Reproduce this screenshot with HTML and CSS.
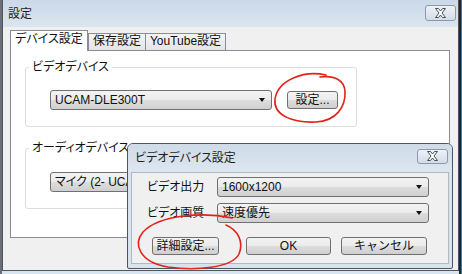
FILE: index.html
```html
<!DOCTYPE html>
<html lang="ja">
<head>
  <meta charset="UTF-8" />
  <title>設定</title>
  <link rel="stylesheet" href="styles.css">
</head>
<body>

  <div class="window main-window">
    <div class="titlebar">
      <span class="title">設定</span>
      <button class="close-btn" type="button">
        <svg width="13" height="10" viewBox="0 0 13 10"><path d="M1.5 0.5H4.5L6.5 3L8.5 0.5H11.5L8 5L11.5 9.5H8.5L6.5 7L4.5 9.5H1.5L5 5Z" fill="#fff" stroke="#46505c" stroke-width="1"/></svg>
      </button>
    </div>
    <div class="client">
      <div class="tabs">
        <div class="tab active">デバイス設定</div>
        <div class="tab tab-save">保存設定</div>
        <div class="tab tab-youtube">YouTube設定</div>
      </div>
      <div class="tab-panel">
        <fieldset class="group">
          <legend>ビデオデバイス</legend>
          <div class="group-row">
            <div class="combo combo-device"><span>UCAM-DLE300T</span><span class="arrow"></span></div>
            <button class="btn btn-setting" type="button">設定...</button>
          </div>
        </fieldset>
        <fieldset class="group group-audio">
          <legend>オーディオデバイス</legend>
          <div class="group-row">
            <div class="combo combo-device"><span>マイク (2- UCAM-DLE300T)</span><span class="arrow"></span></div>
            <button class="btn btn-setting" type="button">設定...</button>
          </div>
        </fieldset>
      </div>
    </div>
  </div>

  <div class="window dialog">
    <div class="titlebar dialog-titlebar">
      <span class="title">ビデオデバイス設定</span>
      <button class="close-btn" type="button">
        <svg width="13" height="10" viewBox="0 0 13 10"><path d="M1.5 0.5H4.5L6.5 3L8.5 0.5H11.5L8 5L11.5 9.5H8.5L6.5 7L4.5 9.5H1.5L5 5Z" fill="#fff" stroke="#46505c" stroke-width="1"/></svg>
      </button>
    </div>
    <div class="dialog-client">
      <div class="form-row">
        <label>ビデオ出力</label>
        <div class="combo combo-dialog"><span>1600x1200</span><span class="arrow"></span></div>
      </div>
      <div class="form-row">
        <label>ビデオ画質</label>
        <div class="combo combo-dialog"><span>速度優先</span><span class="arrow"></span></div>
      </div>
      <div class="button-row">
        <button class="btn btn-detail" type="button">詳細設定...</button>
        <button class="btn btn-ok" type="button">OK</button>
        <button class="btn btn-cancel" type="button">キャンセル</button>
      </div>
    </div>
  </div>

  <!-- hand drawn red marks -->
  <svg class="marks" width="462" height="274" viewBox="0 0 462 274">
    <path d="M326 75 C304 70 278 80 275 99 C273 115 292 123 316 122 C336 121 346 107 345 91 C344 81 336 75 320 77" />
    <path d="M232 218 C205 212 160 214 143 232 C133 244 139 262 168 267 C195 271 232 268 239 254 C244 242 238 230 226 225" />
  </svg>

</body>
</html>
```

FILE: styles.css
```css
* {
  box-sizing: border-box;
  margin: 0;
  padding: 0;
}

body {
  width: 462px;
  height: 274px;
  overflow: hidden;
  position: relative;
  font-family: "Liberation Sans", "Noto Sans CJK JP", sans-serif;
  font-size: 12px;
  font-feature-settings: "palt";
  color: #111;
  background: linear-gradient(to right, #6b7078 0, #6b7078 2px, #d7e5f3 2px, #d7e5f3 459px, #1d2530 459px, #1d2530 461px, #3d7ab8 461px);
}

button {
  font-family: inherit;
  font-size: 12px;
  color: #111;
}

.window {
  position: absolute;
  display: flex;
  flex-direction: column;
}

.main-window {
  left: 2px;
  top: 0;
  width: 457px;
  height: 271px;
  border: 1px solid #4f5660;
  border-top: none;
  background: #f0f0f0;
}

.titlebar {
  display: flex;
  align-items: center;
  height: 27px;
  padding-left: 5px;
  background: linear-gradient(#cbd9e8, #dbe5ef);
}

.title {
  line-height: 14px;
  color: #1e1e1e;
}

.close-btn {
  margin-left: auto;
  margin-right: 2px;
  margin-bottom: 2px;
  width: 31px;
  height: 16px;
  border: 1px solid #8c99aa;
  border-radius: 3px;
  background: linear-gradient(#eef2f7, #d3dce7);
  display: flex;
  align-items: center;
  justify-content: center;
}

.client {
  padding: 3px 0 0 7px;
}

.tabs {
  display: flex;
  align-items: flex-end;
  height: 21px;
}

.tab {
  height: 17px;
  margin-bottom: 1px;
  border: 1px solid #898c95;
  border-bottom: none;
  background: linear-gradient(#f4f4f4, #e4e4e4);
  line-height: 15px;
  text-align: center;
}

.tab.active {
  position: relative;
  z-index: 1;
  width: 78px;
  height: 21px;
  margin-bottom: 0;
  background: #fff;
  line-height: 17px;
}

.tab-save {
  width: 58px;
}

.tab-youtube {
  width: 81px;
  margin-left: -1px;
}

.tab-panel {
  width: 440px;
  height: 188px;
  margin-top: -1px;
  padding: 9px 0 0 14px;
  border: 1px solid #898c95;
  background: #fff;
}

.group {
  width: 332px;
  border: 1px solid #d9dee3;
  border-radius: 3px;
}

.group legend {
  margin-left: 3px;
  padding: 0 3px;
  line-height: 14px;
}

.group-audio {
  margin-top: 14px;
}

.group-row {
  display: flex;
  align-items: center;
  gap: 15px;
  padding: 16px 0 16px 24px;
}

.group-audio .group-row {
  padding-top: 17px;
}

.combo {
  display: flex;
  align-items: center;
  height: 20px;
  padding: 0 6px 0 4px;
  border: 1px solid #707070;
  border-radius: 3px;
  background: linear-gradient(#f3f3f3 0, #ebebeb 50%, #dddddd 50%, #d0d0d0 100%);
  line-height: 14px;
  white-space: nowrap;
  overflow: hidden;
}

.combo .arrow {
  margin-left: auto;
  width: 0;
  height: 0;
  border-left: 3.5px solid transparent;
  border-right: 3.5px solid transparent;
  border-top: 4px solid #111;
}

.combo-device {
  width: 222px;
}

.btn {
  height: 18px;
  border: 1px solid #707070;
  border-radius: 3px;
  background: linear-gradient(#f3f3f3 0, #ebebeb 50%, #dddddd 50%, #cfcfcf 100%);
  line-height: 14px;
}

.btn-setting {
  width: 51px;
}

.dialog {
  left: 127px;
  top: 143px;
  width: 326px;
  height: 126px;
  padding: 0 3px 4px;
  border: 1px solid #4a5563;
  border-radius: 6px 6px 2px 2px;
  background: #d9e3ee;
}

.dialog-titlebar {
  height: 28px;
  margin: 0 -3px;
  padding-left: 7px;
  border-radius: 5px 5px 0 0;
  background: linear-gradient(#cfdbe8, #dde6f0);
}

.dialog-titlebar .close-btn {
  margin-right: 4px;
  margin-bottom: 4px;
  height: 15px;
}

.dialog-client {
  flex: 1;
  padding: 4px 0 0 15px;
  border: 1px solid #aeb9c5;
  background: #f0f0f0;
}

.form-row {
  display: flex;
  align-items: center;
  margin-bottom: 6px;
}

.form-row label {
  width: 70px;
  line-height: 14px;
}

.combo-dialog {
  width: 212px;
}

.button-row {
  display: flex;
  margin-top: 14px;
  padding-left: 5px;
}

.btn-detail {
  width: 67px;
}

.btn-ok {
  width: 85px;
  margin-left: 27px;
}

.btn-cancel {
  width: 86px;
  margin-left: 10px;
}

.marks {
  position: absolute;
  left: 0;
  top: 0;
  pointer-events: none;
}

.marks path {
  fill: none;
  stroke: #e2231a;
  stroke-width: 1.6;
  stroke-linecap: round;
}
```
